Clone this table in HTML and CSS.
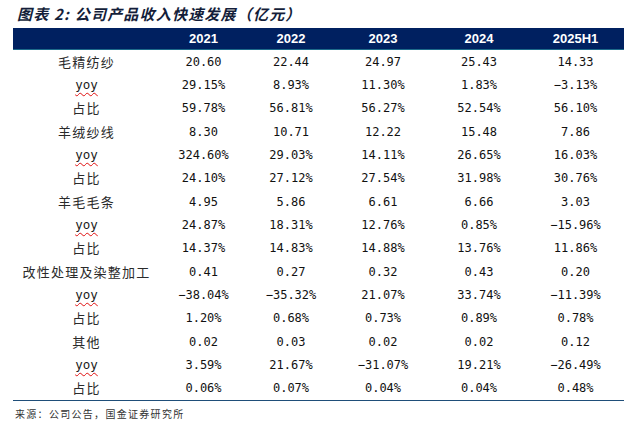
FILE: index.html
```html
<!DOCTYPE html>
<html lang="zh">
<head>
<meta charset="utf-8">
<title>公司产品收入快速发展</title>
<link rel="stylesheet" href="styles.css">
</head>
<body>
<div class="page">
  <div class="title">图表 2: 公司产品收入快速发展（亿元）</div>
  <div class="table">
    <div class="row head">
      <div class="cell label"></div>
      <div class="cell">2021</div>
      <div class="cell">2022</div>
      <div class="cell">2023</div>
      <div class="cell">2024</div>
      <div class="cell">2025H1</div>
    </div>

    <div class="row"><div class="cell label">毛精纺纱</div><div class="cell">20.60</div><div class="cell">22.44</div><div class="cell">24.97</div><div class="cell">25.43</div><div class="cell">14.33</div></div>
    <div class="row"><div class="cell ylabel"><span class="yoy">yoy</span></div><div class="cell">29.15%</div><div class="cell">8.93%</div><div class="cell">11.30%</div><div class="cell">1.83%</div><div class="cell">−3.13%</div></div>
    <div class="row"><div class="cell label">占比</div><div class="cell">59.78%</div><div class="cell">56.81%</div><div class="cell">56.27%</div><div class="cell">52.54%</div><div class="cell">56.10%</div></div>

    <div class="row"><div class="cell label">羊绒纱线</div><div class="cell">8.30</div><div class="cell">10.71</div><div class="cell">12.22</div><div class="cell">15.48</div><div class="cell">7.86</div></div>
    <div class="row"><div class="cell ylabel"><span class="yoy">yoy</span></div><div class="cell">324.60%</div><div class="cell">29.03%</div><div class="cell">14.11%</div><div class="cell">26.65%</div><div class="cell">16.03%</div></div>
    <div class="row"><div class="cell label">占比</div><div class="cell">24.10%</div><div class="cell">27.12%</div><div class="cell">27.54%</div><div class="cell">31.98%</div><div class="cell">30.76%</div></div>

    <div class="row"><div class="cell label">羊毛毛条</div><div class="cell">4.95</div><div class="cell">5.86</div><div class="cell">6.61</div><div class="cell">6.66</div><div class="cell">3.03</div></div>
    <div class="row"><div class="cell ylabel"><span class="yoy">yoy</span></div><div class="cell">24.87%</div><div class="cell">18.31%</div><div class="cell">12.76%</div><div class="cell">0.85%</div><div class="cell">−15.96%</div></div>
    <div class="row"><div class="cell label">占比</div><div class="cell">14.37%</div><div class="cell">14.83%</div><div class="cell">14.88%</div><div class="cell">13.76%</div><div class="cell">11.86%</div></div>

    <div class="row"><div class="cell label">改性处理及染整加工</div><div class="cell">0.41</div><div class="cell">0.27</div><div class="cell">0.32</div><div class="cell">0.43</div><div class="cell">0.20</div></div>
    <div class="row"><div class="cell ylabel"><span class="yoy">yoy</span></div><div class="cell">−38.04%</div><div class="cell">−35.32%</div><div class="cell">21.07%</div><div class="cell">33.74%</div><div class="cell">−11.39%</div></div>
    <div class="row"><div class="cell label">占比</div><div class="cell">1.20%</div><div class="cell">0.68%</div><div class="cell">0.73%</div><div class="cell">0.89%</div><div class="cell">0.78%</div></div>

    <div class="row"><div class="cell label">其他</div><div class="cell">0.02</div><div class="cell">0.03</div><div class="cell">0.02</div><div class="cell">0.02</div><div class="cell">0.12</div></div>
    <div class="row"><div class="cell ylabel"><span class="yoy">yoy</span></div><div class="cell">3.59%</div><div class="cell">21.67%</div><div class="cell">−31.07%</div><div class="cell">19.21%</div><div class="cell">−26.49%</div></div>
    <div class="row last"><div class="cell label">占比</div><div class="cell">0.06%</div><div class="cell">0.07%</div><div class="cell">0.04%</div><div class="cell">0.04%</div><div class="cell">0.48%</div></div>
  </div>
  <div class="source">来源：公司公告，国金证券研究所</div>
</div>
</body>
</html>
```

FILE: styles.css
```css
html, body {
  margin: 0;
  padding: 0;
  background: #ffffff;
}

.page {
  width: 640px;
  height: 426px;
  padding-left: 13px;
  box-sizing: border-box;
}

.title {
  height: 28px;
  display: flex;
  align-items: center;
  padding-left: 4px;
  padding-bottom: 2px;
  box-sizing: border-box;
  font-family: "Noto Sans CJK SC", sans-serif;
  font-size: 15px;
  font-weight: 700;
  font-style: italic;
  color: #141e3a;
  letter-spacing: 1.2px;
}

.table {
  width: 611px;
}

.row {
  display: grid;
  grid-template-columns: 147px 87px 88px 96px 96px 97px;
  height: 23.33px;
  align-items: center;
}

.row.head {
  height: 21px;
  background: #002060;
  border-bottom: 1px solid #1d6a8a;
}

.row.last {
  border-bottom: 1.5px solid #1f4e79;
}

.cell {
  text-align: center;
  font-family: "DejaVu Sans Mono", monospace;
  font-size: 12px;
  line-height: 16px;
  color: #111111;
  white-space: nowrap;
}

.head .cell {
  font-family: "Liberation Sans", Arial, sans-serif;
  font-weight: 700;
  font-size: 13px;
  color: #ffffff;
  padding-top: 1px;
}

.cell.label {
  font-family: "Noto Sans CJK SC", sans-serif;
  font-size: 13px;
  letter-spacing: 1.2px;
  color: #2a2a2a;
}

.cell.ylabel {
  font-family: "DejaVu Sans Mono", monospace;
  font-size: 12.5px;
  color: #1a1a1a;
}

.yoy {
  text-decoration: underline wavy #e01010;
  text-decoration-thickness: 1px;
  text-underline-offset: 3px;
}

.source {
  padding-top: 5px;
  padding-left: 2px;
  font-family: "Noto Sans CJK SC", sans-serif;
  font-size: 10px;
  letter-spacing: 1.3px;
  color: #333333;
}
```
